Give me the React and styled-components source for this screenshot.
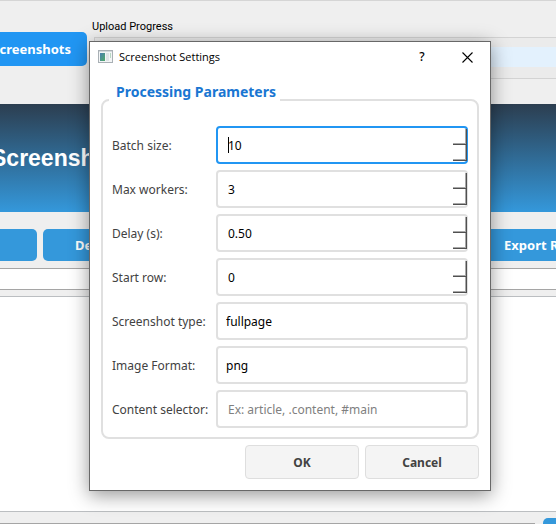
import React from "react";
import styled, { createGlobalStyle, css } from "styled-components";

const GlobalStyle = createGlobalStyle`
  *, *::before, *::after { box-sizing: border-box; }
  body { margin: 0; background: #efefef; font: 12px/16px "Noto Sans", "Open Sans", sans-serif; }
  button, input, select, textarea { font: inherit; margin: 0; }
`;

const Page = styled.main`
  position: relative;
  display: flex;
  flex-direction: column;
  height: 100vh;
  overflow: hidden;
  border-top: 1px solid #d5d5d5;
`;

const TopBar = styled.header`
  display: flex;
  gap: 5px;
  height: 103px;
  flex: none;
`;

const CaptureButton = styled.button`
  width: 87px;
  height: 34px;
  margin-top: 31px;
  padding: 0 16px 0 0;
  border: 0;
  border-radius: 0 5px 5px 0;
  background: #2196f3;
  color: #fff;
  font-size: 13px;
  font-weight: 700;
  text-align: right;
  direction: rtl;
  white-space: nowrap;
  overflow: hidden;
`;

const Progress = styled.section`
  flex: 1;
  padding-top: 18px;
`;

const ProgressLabel = styled.h2`
  margin: 0 0 2px;
  font: 11px/16px Roboto, sans-serif;
  color: #000;
`;

const ProgressFrame = styled.div`
  margin-left: 2px;
  height: 42px;
  padding: 9px 0 0 10px;
  border: 1px solid #d3d3d3;
  border-right: 0;
  background: #ebebeb;
`;

const ProgressTrack = styled.div`
  height: 20px;
  background: #e3f1fd;
`;

const Banner = styled.div`
  display: flex;
  align-items: center;
  height: 108px;
  flex: none;
  background: linear-gradient(#2c3e50, #3498db);
  overflow: hidden;
`;

const BannerTitle = styled.h1`
  margin: 0 0 0 -9px;
  font: 700 23px/28px "Liberation Sans", Arial, sans-serif;
  color: #fff;
`;

const Actions = styled.nav`
  display: grid;
  grid-template-columns: 37px 220px 1fr;
  gap: 6px;
  margin: 17px 0 7px;
  flex: none;
`;

const ActionButton = styled.button`
  height: 32px;
  padding: 0 0 0 ${(p) => p.$indent || 0}px;
  border: 0;
  border-radius: ${(p) => p.$radius || "5px"};
  background: #3498db;
  color: #fff;
  font-size: 13px;
  font-weight: 700;
  text-align: left;
  white-space: nowrap;
  overflow: hidden;
`;

const AddressInput = styled.input`
  width: 100%;
  height: 22px;
  flex: none;
  border: 1px solid #a5a5a5;
  border-width: 1px 0;
  background: #fff;
`;

const LogArea = styled.textarea`
  flex: 1;
  min-height: 0;
  width: 100%;
  margin-top: 6px;
  border: 1px solid #bbbec1;
  border-width: 1px 0;
  background: #fff;
  resize: none;
`;

const Footer = styled.footer`
  display: flex;
  gap: 8px;
  height: 12px;
  flex: none;
  overflow: hidden;
`;

const FooterInput = styled.input`
  flex: 1;
  height: 22px;
  margin-top: 11px;
  border: 1px solid #a5a5a5;
  border-left: 0;
`;

const FooterButton = styled.button`
  width: 13px;
  height: 32px;
  margin-top: 6px;
  padding: 0;
  border: 0;
  border-radius: 5px 0 0 5px;
  background: #3498db;
`;

const Overlay = styled.div`
  position: absolute;
  inset: 40px 65px auto 89px;
`;

const Dialog = styled.section`
  border: 1px solid #686868;
  background: #fff;
  box-shadow: 0 4px 18px rgba(0, 0, 0, 0.42);
`;

const TitleBar = styled.header`
  display: flex;
  align-items: center;
  height: 30px;
  padding: 0 6px 0 8px;
`;

const DialogTitle = styled.h2`
  flex: 1;
  margin: 0 0 0 5px;
  font: 11px/16px "Open Sans", sans-serif;
  color: #000;
`;

const CaptionButton = styled.button`
  display: grid;
  place-items: center;
  width: 34px;
  height: 28px;
  margin-left: ${(p) => p.$gap || 0}px;
  padding: 0;
  border: 0;
  background: none;
  color: #000;
  font-size: 12px;
  font-weight: 500;
`;

const DialogBody = styled.form`
  padding: 12px 11px 11px;
`;

const Group = styled.fieldset`
  min-width: 0;
  margin: 0;
  padding: 10px 9px 9px;
  border: 2px solid #e0e0e0;
  border-radius: 8px;
`;

const GroupTitle = styled.legend`
  margin: 0 0 0 -3px;
  padding: 0 4px 16px 7px;
  font-size: 14px;
  line-height: 16px;
  font-weight: 700;
  color: #1976d2;
`;

const Fields = styled.div`
  display: grid;
  grid-template-columns: 98px 1fr;
  gap: 6px;
  align-items: center;
`;

const Label = styled.label`
  padding-top: 2px;
  color: #424242;
  white-space: nowrap;
`;

const fieldBox = css`
  width: 100%;
  height: 38px;
  border: 2px solid ${(p) => (p.$active ? "#2196f3" : "#e0e0e0")};
  border-radius: 4px;
  background: #fff;
  color: #000;
  outline: 0;
`;

const TextInput = styled.input`
  ${fieldBox}
  padding: 0 10px;
  appearance: textfield;
  &::-webkit-inner-spin-button { appearance: none; margin: 0; }
  &::placeholder { color: #808080; opacity: 1; }
`;

const Choice = styled.select`
  ${fieldBox}
  padding: 2px 8px 0;
  appearance: none;
`;

const SpinWrap = styled.div`
  position: relative;
`;

const Steps = styled.div`
  position: absolute;
  inset: 3px 1px 3px auto;
  display: grid;
  grid-template-rows: 1fr 1fr;
  width: 14px;
`;

const StepButton = styled.button`
  padding: 0;
  border: 0;
  background: #fff;
  box-shadow: inset -1px -1px #505050, inset -2px -2px #a8a8a8;
`;

const Caret = styled.span`
  position: absolute;
  left: 12px;
  top: 11px;
  width: 1px;
  height: 16px;
  background: #000;
`;

const Buttons = styled.div`
  display: flex;
  justify-content: flex-end;
  gap: 6px;
  margin-top: 6px;
`;

const DialogButton = styled.button`
  width: 114px;
  height: 34px;
  padding: 2px 0 0;
  border: 1px solid #dedede;
  border-radius: 4px;
  background: #f4f4f4;
  color: #424242;
  font-weight: 700;
`;

function WindowIcon() {
  return (
    <svg width="16" height="14" viewBox="0 0 16 14" aria-hidden="true">
      <defs>
        <linearGradient id="pane" x1="0" y1="0" x2="1" y2="1">
          <stop offset="0" stopColor="#4c7fb0" />
          <stop offset="1" stopColor="#4faa68" />
        </linearGradient>
      </defs>
      <rect x="0.5" y="0.5" width="14" height="12" fill="#f3f5f6" stroke="#a9b0b5" />
      <path d="M1 1.5h13" stroke="#d2d8dc" />
      <rect x="2" y="3" width="5" height="8" fill="url(#pane)" />
      <rect x="8" y="3" width="3" height="8" fill="#dfe3e6" />
      <rect x="12" y="3" width="1" height="5" fill="#b8d8c3" />
    </svg>
  );
}

function SpinField({ id, label, value, step = 1, active }) {
  const ref = React.useRef(null);
  return (
    <>
      <Label htmlFor={id}>{label}</Label>
      <SpinWrap>
        <TextInput ref={ref} id={id} type="number" step={step} defaultValue={value} $active={active} />
        {active && <Caret />}
        <Steps>
          <StepButton type="button" aria-label={`Increase ${label}`} onClick={() => ref.current.stepUp()} />
          <StepButton type="button" aria-label={`Decrease ${label}`} onClick={() => ref.current.stepDown()} />
        </Steps>
      </SpinWrap>
    </>
  );
}

export default function App() {
  return (
    <>
      <GlobalStyle />
      <Page>
        <TopBar>
          <CaptureButton>creenshots</CaptureButton>
          <Progress>
            <ProgressLabel>Upload Progress</ProgressLabel>
            <ProgressFrame><ProgressTrack /></ProgressFrame>
          </Progress>
        </TopBar>
        <Banner><BannerTitle>Screensh</BannerTitle></Banner>
        <Actions>
          <ActionButton $radius="0 5px 5px 0" aria-label="Action" />
          <ActionButton $indent={32}>De</ActionButton>
          <ActionButton $indent={235} $radius="5px 0 0 5px">Export R</ActionButton>
        </Actions>
        <AddressInput aria-label="Address" />
        <LogArea aria-label="Log" readOnly />
        <Footer>
          <FooterInput aria-label="Footer field" />
          <FooterButton aria-label="Send" />
        </Footer>

        <Overlay>
          <Dialog role="dialog" aria-labelledby="dialog-title">
            <TitleBar>
              <WindowIcon />
              <DialogTitle id="dialog-title">Screenshot Settings</DialogTitle>
              <CaptionButton aria-label="Help">?</CaptionButton>
              <CaptionButton aria-label="Close" $gap={11}>
                <svg width="11" height="11" viewBox="0 0 11 11" aria-hidden="true">
                  <path d="M0.5 0.5l10 10M10.5 0.5l-10 10" stroke="#000" strokeWidth="1.1" />
                </svg>
              </CaptionButton>
            </TitleBar>
            <DialogBody onSubmit={(e) => e.preventDefault()}>
              <Group>
                <GroupTitle>Processing Parameters</GroupTitle>
                <Fields>
                  <SpinField id="batch" label="Batch size:" value="10" active />
                  <SpinField id="workers" label="Max workers:" value="3" />
                  <SpinField id="delay" label="Delay (s):" value="0.50" step="0.01" />
                  <SpinField id="start" label="Start row:" value="0" />
                  <Label htmlFor="type">Screenshot type:</Label>
                  <Choice id="type"><option>fullpage</option></Choice>
                  <Label htmlFor="format">Image Format:</Label>
                  <Choice id="format"><option>png</option></Choice>
                  <Label htmlFor="selector">Content selector:</Label>
                  <TextInput id="selector" type="text" placeholder="Ex: article, .content, #main" />
                </Fields>
              </Group>
              <Buttons>
                <DialogButton type="submit">OK</DialogButton>
                <DialogButton type="button">Cancel</DialogButton>
              </Buttons>
            </DialogBody>
          </Dialog>
        </Overlay>
      </Page>
    </>
  );
}
